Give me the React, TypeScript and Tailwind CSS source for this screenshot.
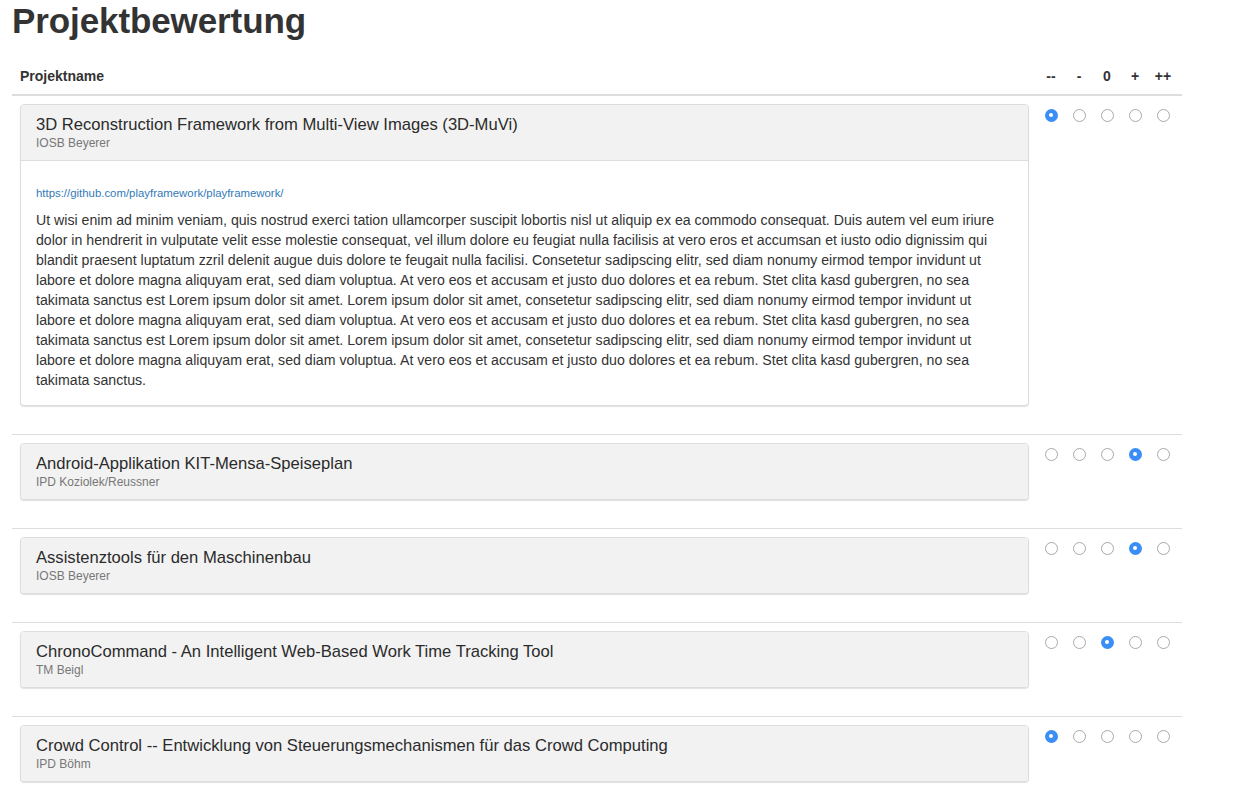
const L4 =
  "labore et dolore magna aliquyam erat, sed diam voluptua. At vero eos et accusam et justo duo dolores et ea rebum. Stet clita kasd gubergren, no sea";
const L5 =
  "takimata sanctus est Lorem ipsum dolor sit amet. Lorem ipsum dolor sit amet, consetetur sadipscing elitr, sed diam nonumy eirmod tempor invidunt ut";

const bodyLines = [
  "Ut wisi enim ad minim veniam, quis nostrud exerci tation ullamcorper suscipit lobortis nisl ut aliquip ex ea commodo consequat. Duis autem vel eum iriure",
  "dolor in hendrerit in vulputate velit esse molestie consequat, vel illum dolore eu feugiat nulla facilisis at vero eros et accumsan et iusto odio dignissim qui",
  "blandit praesent luptatum zzril delenit augue duis dolore te feugait nulla facilisi. Consetetur sadipscing elitr, sed diam nonumy eirmod tempor invidunt ut",
  L4,
  L5,
  L4,
  L5,
  L4,
  "takimata sanctus.",
];

type Project = {
  title: string;
  chair: string;
  rating: number;
  expanded?: boolean;
};

const projects: Project[] = [
  {
    title: "3D Reconstruction Framework from Multi-View Images (3D-MuVi)",
    chair: "IOSB Beyerer",
    rating: 0,
    expanded: true,
  },
  { title: "Android-Applikation KIT-Mensa-Speiseplan", chair: "IPD Koziolek/Reussner", rating: 3 },
  { title: "Assistenztools für den Maschinenbau", chair: "IOSB Beyerer", rating: 3 },
  { title: "ChronoCommand - An Intelligent Web-Based Work Time Tracking Tool", chair: "TM Beigl", rating: 2 },
  {
    title: "Crowd Control -- Entwicklung von Steuerungsmechanismen für das Crowd Computing",
    chair: "IPD Böhm",
    rating: 0,
  },
];

const labels = ["--", "-", "0", "+", "++"];

const Radio = ({ checked }: { checked: boolean }) =>
  checked ? (
    <span className="mt-[5px] flex h-[13px] w-[13px] items-center justify-center rounded-full bg-[#3b8ef5]">
      <span className="h-[4px] w-[4px] rounded-full bg-white" />
    </span>
  ) : (
    <span className="mt-[5px] block h-[13px] w-[13px] rounded-full border border-[#a9a9a9] bg-white" />
  );

export default function App() {
  return (
    <div className="min-h-screen bg-white text-[#333] font-['Liberation_Sans',Arial,sans-serif]">
      <div className="ml-3 w-[1170px]">
        <h1 className="mt-[2px] mb-[17px] text-[35px] font-bold leading-[1.1] tracking-[-0.1px] text-[#333]">
          Projektbewertung
        </h1>

        {/* header row */}
        <div className="flex border-b-2 border-[#ddd] text-[14px] font-bold leading-5">
          <div className="flex-1 p-2">Projektname</div>
          {labels.map((l) => (
            <div key={l} className="w-[28px] py-2 text-center">
              {l}
            </div>
          ))}
          <div className="w-[5px]" />
        </div>

        {projects.map((p, i) => (
          <div key={p.title} className={"flex " + (i > 0 ? "border-t border-[#ddd]" : "")}>
            <div className="flex-1 px-2 pt-2 pb-2">
              <div className="mb-5 overflow-hidden rounded border border-[#ddd] bg-white shadow-[0_1px_1px_rgba(0,0,0,0.12)]">
                <div className={"bg-[#f2f2f2] px-[15px] pt-[10px] pb-[8px] " + (p.expanded ? "border-b border-[#ddd]" : "")}>
                  <div className="text-[16.6px] leading-[19px] text-[#2b2b2b]">{p.title}</div>
                  <div className="mt-[1px] text-[12px] leading-[17px] text-[#777]">{p.chair}</div>
                </div>
                {p.expanded && (
                  <div className="px-[15px] pt-[24px] pb-[15px]">
                    <a
                      href="#"
                      className="mb-[9px] block text-[11.4px] leading-4 text-[#337ab7]"
                    >
                      https://github.com/playframework/playframework/
                    </a>
                    <p className="text-[14.15px] leading-5">
                      {bodyLines.map((line, k) => (
                        <span key={k} className="block whitespace-nowrap">
                          {line}
                        </span>
                      ))}
                    </p>
                  </div>
                )}
              </div>
            </div>
            {labels.map((l, k) => (
              <div key={l} className="flex w-[28px] justify-center pt-2">
                <Radio checked={k === p.rating} />
              </div>
            ))}
            <div className="w-[5px]" />
          </div>
        ))}
      </div>
    </div>
  );
}
